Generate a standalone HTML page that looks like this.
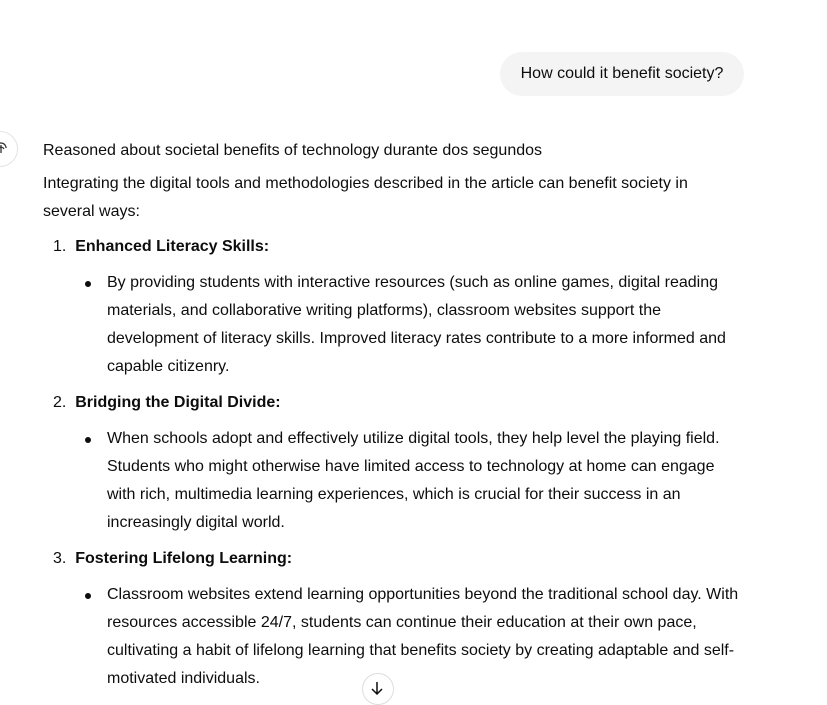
<!DOCTYPE html>
<html><head><style>
body{margin:0;width:827px;height:695px;overflow:hidden;background:#fff;font-family:"Liberation Sans",sans-serif;color:#0d0d0d;font-size:16px;position:relative}
.l{position:absolute;white-space:nowrap;line-height:20px}
.bubble{position:absolute;left:500px;top:52px;width:244px;height:44px;border-radius:22px;background:#f4f4f4;text-align:center;line-height:44px;font-size:16px}
b{font-weight:bold}
.dot{position:absolute;width:6px;height:6px;border-radius:3px;background:#0d0d0d}
</style></head><body>
<div class="bubble">How could it benefit society?</div>
<div style="position:absolute;left:-18px;top:131px;width:34px;height:34px;border:1px solid #e3e3e3;border-radius:50%"></div>
<svg style="position:absolute;left:-6px;top:140px" width="14" height="16" viewBox="0 0 14 16"><path d="M2 8a5 5 0 0 1 10 0M4 12a3 3 0 0 1 6-3M7 5v8" stroke="#333" stroke-width="1.3" fill="none"/></svg>
<div class="l" style="left:43px;top:141px">Reasoned about societal benefits of technology durante dos segundos</div>
<div class="l" style="left:43px;top:174px">Integrating the digital tools and methodologies described in the article can benefit society in</div>
<div class="l" style="left:43px;top:202px">several ways:</div>
<div class="l" style="left:53px;top:237px">1.&nbsp; <b>Enhanced Literacy Skills:</b></div>
<div class="dot" style="left:85px;top:281px"></div>
<div class="l" style="left:107px;top:273px">By providing students with interactive resources (such as online games, digital reading</div>
<div class="l" style="left:107px;top:301px">materials, and collaborative writing platforms), classroom websites support the</div>
<div class="l" style="left:107px;top:329px">development of literacy skills. Improved literacy rates contribute to a more informed and</div>
<div class="l" style="left:107px;top:357px">capable citizenry.</div>
<div class="l" style="left:53px;top:393px">2.&nbsp; <b>Bridging the Digital Divide:</b></div>
<div class="dot" style="left:85px;top:437px"></div>
<div class="l" style="left:107px;top:429px">When schools adopt and effectively utilize digital tools, they help level the playing field.</div>
<div class="l" style="left:107px;top:457px">Students who might otherwise have limited access to technology at home can engage</div>
<div class="l" style="left:107px;top:485px">with rich, multimedia learning experiences, which is crucial for their success in an</div>
<div class="l" style="left:107px;top:513px">increasingly digital world.</div>
<div class="l" style="left:53px;top:549px">3.&nbsp; <b>Fostering Lifelong Learning:</b></div>
<div class="dot" style="left:85px;top:593px"></div>
<div class="l" style="left:107px;top:585px">Classroom websites extend learning opportunities beyond the traditional school day. With</div>
<div class="l" style="left:107px;top:613px">resources accessible 24/7, students can continue their education at their own pace,</div>
<div class="l" style="left:107px;top:641px">cultivating a habit of lifelong learning that benefits society by creating adaptable and self-</div>
<div class="l" style="left:107px;top:669px">motivated individuals.</div>
<div style="position:absolute;left:362px;top:673px;width:30px;height:30px;border:1px solid #ddd;border-radius:50%;background:#fff"></div>
<svg style="position:absolute;left:370px;top:680px" width="14" height="16" viewBox="0 0 14 16"><path d="M7 2v12M2 9l5 5 5-5" stroke="#0d0d0d" stroke-width="1.5" fill="none"/></svg>
</body></html>
